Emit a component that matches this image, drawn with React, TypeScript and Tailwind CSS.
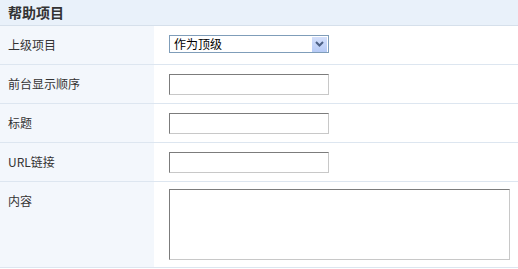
import React from "react";

const font = { fontFamily: '"Noto Sans CJK SC", "Liberation Sans", sans-serif' };

function Row({ label, children, tall }: { label: string; children: React.ReactNode; tall?: boolean }) {
  return (
    <div className={`flex border-b border-[#dde6f0] ${tall ? "h-[86px]" : "h-[39px]"}`}>
      <div
        className={`w-[154px] shrink-0 bg-[#f3f7fc] pl-2 text-[12px] text-[#333] flex ${tall ? "items-start pt-[10px]" : "items-center"}`}
      >
        {label}
      </div>
      <div className={`flex-1 bg-white pl-[15px] flex ${tall ? "items-start pt-[7px]" : "items-center"}`}>
        {children}
      </div>
    </div>
  );
}

function TextInput() {
  return (
    <div className="w-[160px] h-[21px] bg-white border border-t-[#7c7c7c] border-l-[#7c7c7c] border-b-[#c8c8c8] border-r-[#c8c8c8]" />
  );
}

export default function App() {
  return (
    <div className="w-[518px] h-[269px] bg-white overflow-hidden" style={font}>
      <div className="h-[26px] bg-[#e9f1fa] border-b border-[#d6e0eb] flex items-center pl-2">
        <span className="text-[14px] font-bold text-[#333]">帮助项目</span>
      </div>
      <Row label="上级项目">
        <div className="w-[160px] h-[18px] border border-[#7f9db9] bg-white flex items-center justify-between mt-[-2px]">
          <span className="text-[12px] text-black pl-[4px] leading-none">作为顶级</span>
          <div className="w-[15px] h-[15px] mr-[1px] bg-gradient-to-b from-[#d4e0fb] to-[#b6caf6] flex items-center justify-center">
            <svg width="9" height="6" viewBox="0 0 9 6">
              <path d="M1 1 L4.5 4.5 L8 1" stroke="#4d6185" strokeWidth="2" fill="none" />
            </svg>
          </div>
        </div>
      </Row>
      <Row label="前台显示顺序">
        <TextInput />
      </Row>
      <Row label="标题">
        <TextInput />
      </Row>
      <Row label="URL链接">
        <TextInput />
      </Row>
      <Row label="内容" tall>
        <div className="w-[341px] h-[71px] bg-white border border-t-[#7c7c7c] border-l-[#7c7c7c] border-b-[#c8c8c8] border-r-[#c8c8c8]" />
      </Row>
    </div>
  );
}
